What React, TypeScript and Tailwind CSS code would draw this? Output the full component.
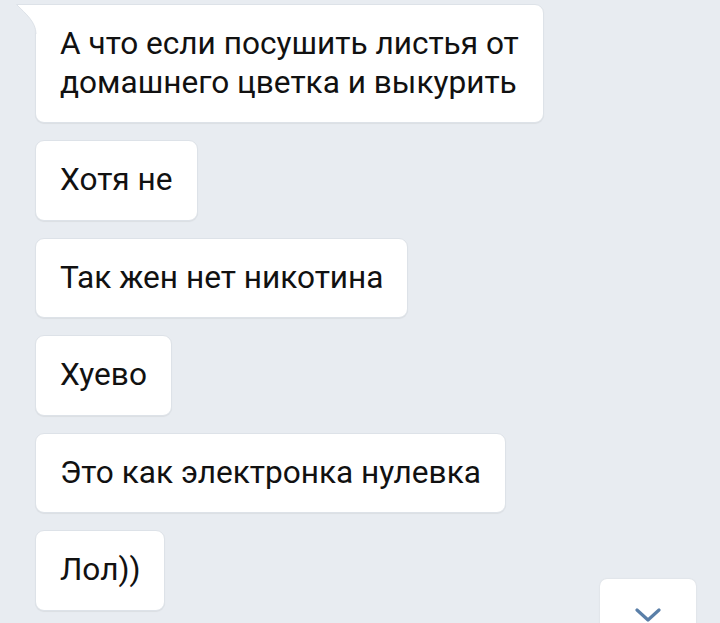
import React from "react";

const msgs = [
  "Хотя не",
  "Так жен нет никотина",
  "Хуево",
  "Это как электронка нулевка",
  "Лол))",
];

function Bubble({ children, tail }: { children: React.ReactNode; tail?: boolean }) {
  return (
    <div
      className={`relative self-start bg-white border border-[#dde2e8] shadow-[0_1px_1px_rgba(0,0,0,0.06)] rounded-[9px] px-[24px] py-[20px] text-[31.6px] leading-[38.5px] text-[#111] ${
        tail ? "rounded-tl-none" : ""
      }`}
    >
      {tail && (
        <svg
          className="absolute left-[-20px] top-[-1px]"
          width="22"
          height="30"
          viewBox="0 0 22 30"
        >
          <path d="M0.5 0.5 H22 V30 H20 C20 18 10 10 0.5 0.5 Z" fill="#ffffff" />
          <path d="M22 0.5 H0.5 C10 10 20 18 20 30" fill="none" stroke="#dde2e8" strokeWidth="1" />
        </svg>
      )}
      {children}
    </div>
  );
}

export default function App() {
  return (
    <div
      className="relative w-[720px] h-[623px] overflow-hidden bg-[#e8ecf1]"
      style={{ fontFamily: "Roboto, 'Noto Sans', sans-serif" }}
    >
      <div className="flex flex-col gap-[17px] pl-[35px] pt-[4px]">
        <Bubble tail>
          А что если посушить листья от
          <br />
          домашнего цветка и выкурить
        </Bubble>
        {msgs.map((m) => (
          <Bubble key={m}>{m}</Bubble>
        ))}
      </div>
      <div className="absolute left-[600px] top-[579px] w-[96px] h-[60px] bg-white rounded-[7px] shadow-[0_0_2px_rgba(0,0,0,0.1)] flex justify-center pt-[29px]">
        <svg width="26" height="14" viewBox="0 0 26 14">
          <path d="M2 2 L13 12 L24 2" fill="none" stroke="#5a7fa8" strokeWidth="3.2" strokeLinecap="round" strokeLinejoin="round" />
        </svg>
      </div>
    </div>
  );
}
